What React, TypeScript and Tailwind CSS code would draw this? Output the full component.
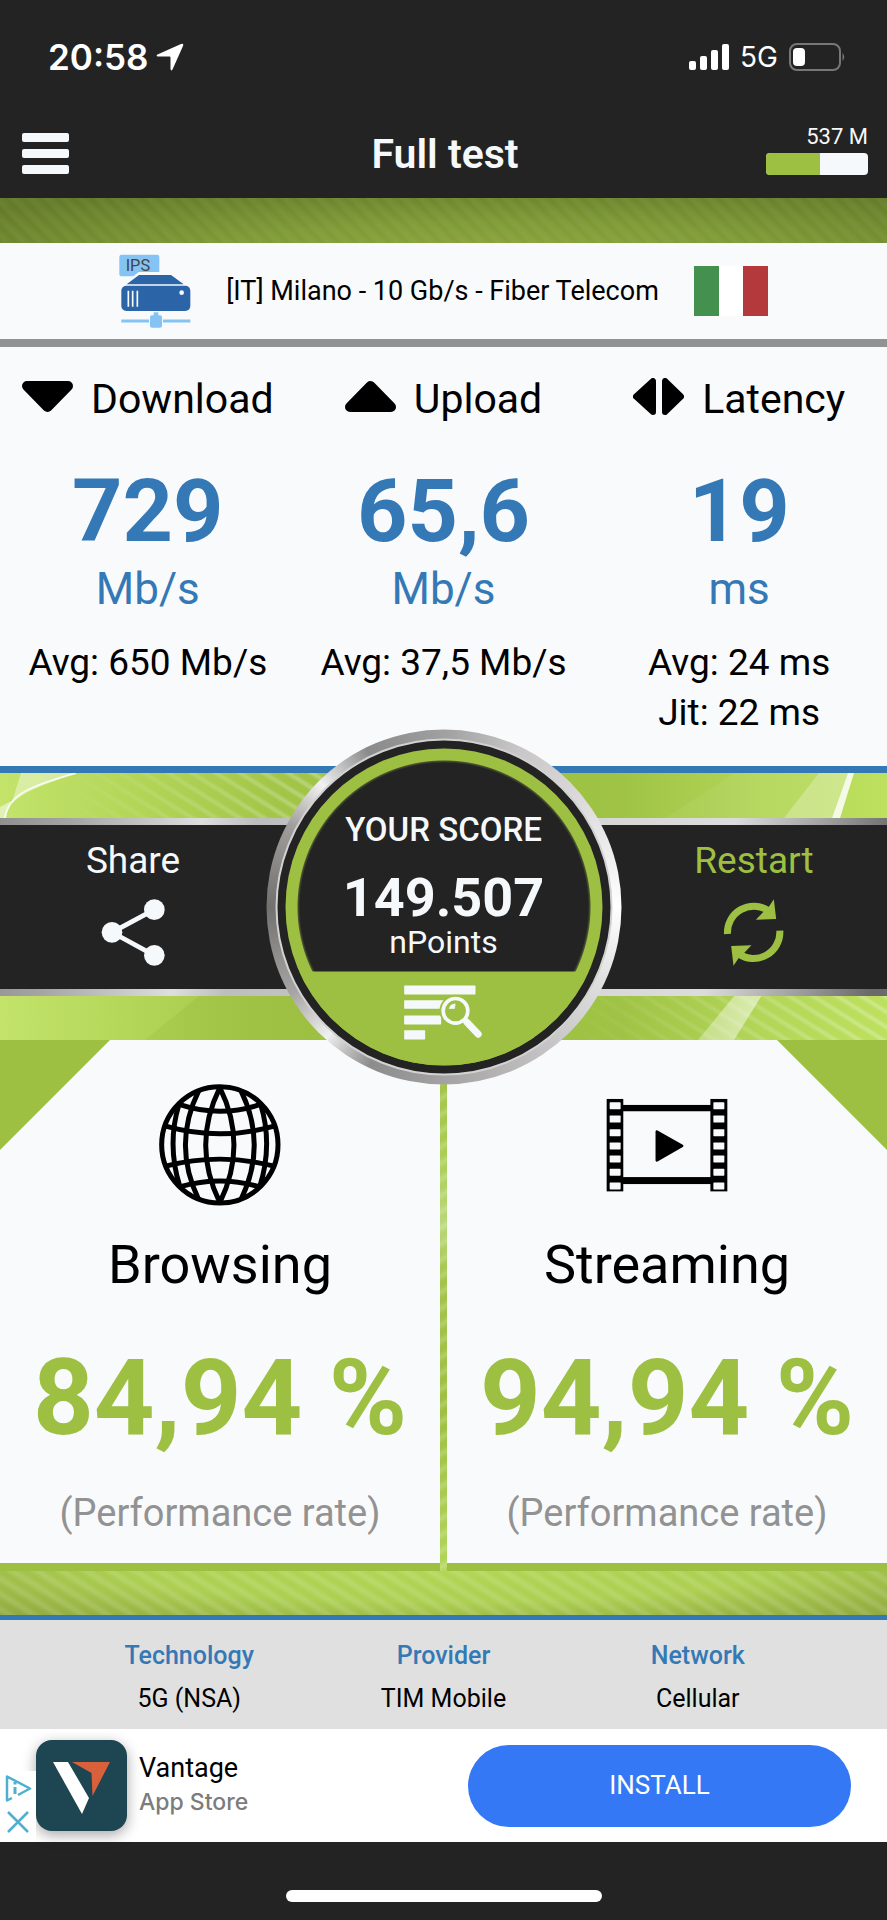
import type { ReactNode } from 'react';

const STATS = [
  { label: 'Download', icon: <DownIcon />, value: '729', unit: 'Mb/s', details: ['Avg: 650 Mb/s'] },
  { label: 'Upload', icon: <UpIcon />, value: '65,6', unit: 'Mb/s', details: ['Avg: 37,5 Mb/s'] },
  { label: 'Latency', icon: <BothIcon />, value: '19', unit: 'ms', details: ['Avg: 24 ms', 'Jit: 22 ms'] },
];

const NETWORK = [
  { label: 'Technology', value: '5G (NSA)' },
  { label: 'Provider', value: 'TIM Mobile' },
  { label: 'Network', value: 'Cellular' },
];

const HOLES = [186, 226, 267, 307, 346, 386, 427];

function DownIcon() {
  return (
    <svg className="w-[51px] h-[42px]" viewBox="0 0 51 42" stroke="#000" strokeWidth="10" strokeLinejoin="round">
      <path d="M5 8 H46 L25.500 29 Z" />
    </svg>
  );
}

function UpIcon() {
  return (
    <svg className="w-[51px] h-[42px]" viewBox="0 0 51 42" stroke="#000" strokeWidth="10" strokeLinejoin="round">
      <path d="M5 29 H46 L25.500 8 Z" />
    </svg>
  );
}

function BothIcon() {
  return (
    <svg className="w-[51px] h-[42px]" viewBox="0 0 51 42" stroke="#000" strokeWidth="6" strokeLinejoin="round">
      <path d="M20 3 V34 L3 18.500 Z" />
      <path d="M32 3 V34 L48 18.500 Z" />
    </svg>
  );
}

function ServerIcon() {
  return (
    <svg className="w-[72px] h-[74px]" viewBox="62 46 216 222">
      <path d="M70 48 H176 Q183 48 183 55 V100 H121 L105 113 H71 Q63 113 63 105 V55 Q63 48 70 48 Z" fill="#84c3f3" />
      <text x="82" y="97" fontSize="49" fontFamily="Roboto, sans-serif" fill="#444">IPS</text>
      <path d="M85 137 L122 109 H218 L256 137 Z" fill="#2b65a7" />
      <rect x="69" y="141" width="207" height="76" rx="15" fill="#2b65a7" />
      <path d="M90 156 V204 M103 156 V204 M117 156 V204" stroke="#f9fafc" strokeWidth="5" />
      <circle cx="250" cy="162" r="7" fill="#f9fafc" />
      <path d="M69 247 H152 M194 247 H276" stroke="#84c3f3" strokeWidth="9" />
      <rect x="155" y="230" width="36" height="37" rx="6" fill="#84c3f3" />
      <rect x="166" y="221" width="14" height="12" fill="#84c3f3" />
    </svg>
  );
}

function GlobeIcon() {
  return (
    <svg className="w-[122px] h-[122px]" viewBox="477 131 367 367" fill="none" stroke="#000" strokeWidth="15">
      <circle cx="660" cy="314" r="175" />
      <path d="M540 193 Q660 233 780 193 M497 258 Q660 304 823 258 M497 378 Q660 336 823 378 M542 440 Q660 406 778 440" />
      <path d="M660 142 Q575 314 660 488 M660 142 Q745 314 660 488" />
      <path d="M597 150 Q516 314 597 480 M723 150 Q804 314 723 480" />
      <path d="M537 193 Q500 314 540 440 M783 193 Q820 314 780 440" />
    </svg>
  );
}

function FilmIcon() {
  return (
    <svg className="w-[122px] h-[122px]" viewBox="505 131 367 367">
      <rect x="507" y="176" width="50" height="278" />
      <rect x="819" y="176" width="51" height="278" />
      <rect x="550" y="194" width="275" height="19" />
      <rect x="550" y="411" width="275" height="21" />
      {HOLES.map((y) => (
        <g key={y} fill="#f9fafc">
          <rect x="516" y={y} width="33" height="21" rx="2" />
          <rect x="828" y={y} width="33" height="21" rx="2" />
        </g>
      ))}
      <path d="M658 274 L734 317 L658 361 Z" stroke="#000" strokeWidth="8" strokeLinejoin="round" />
    </svg>
  );
}

function ShareIcon() {
  return (
    <svg className="w-16 h-[67px]" viewBox="301 540 192 201">
      <path d="M461 572 L334 640 L461 709" fill="none" stroke="#f5f9fc" strokeWidth="14" />
      <g fill="#f5f9fc">
        <circle cx="461" cy="572" r="31" />
        <circle cx="334" cy="640" r="31" />
        <circle cx="461" cy="709" r="31" />
      </g>
    </svg>
  );
}

function RestartIcon() {
  return (
    <svg className="w-[67px] h-[67px]" viewBox="360 540 200 201" fill="#9dc042">
      <g fill="none" stroke="#9dc042" strokeWidth="21">
        <path d="M382 645 A79 79 0 0 1 505 575" />
        <path d="M539 635 A79 79 0 0 1 416 705" />
      </g>
      <path d="M521 541 L528 600 L467 602 L490 578 L503 568 Z" />
      <path d="M400 740 L393 681 L454 679 L431 703 L418 713 Z" />
    </svg>
  );
}

function DetailsIcon() {
  return (
    <svg className="w-20 h-[57px]" viewBox="460 795 240 171">
      <g fill="#f5f9fc">
        <rect x="462" y="798" width="214" height="27" rx="2" />
        <rect x="462" y="842" width="120" height="26" rx="2" />
        <rect x="462" y="888" width="111" height="27" rx="2" />
        <rect x="462" y="932" width="63" height="28" rx="2" />
      </g>
      <circle cx="616" cy="874" r="48" fill="#9dc042" />
      <circle cx="616" cy="874" r="37" fill="none" stroke="#f5f9fc" strokeWidth="11" />
      <path d="M642 900 L652 910" stroke="#f5f9fc" strokeWidth="11" />
      <path d="M650 908 L684 944" stroke="#f5f9fc" strokeWidth="21" strokeLinecap="round" />
      <path d="M597 867 Q600 854 615 853 L613 867 Z" fill="#f5f9fc" stroke="#f5f9fc" strokeWidth="2" />
    </svg>
  );
}

// Glossy wallpaper that shows behind the share / score / restart strip
function GreenBackdrop() {
  return (
    <svg className="absolute inset-0 w-full h-full" viewBox="0 0 887 267" preserveAspectRatio="none">
      <defs>
        <linearGradient id="base" x1="0" x2="1" y1="0" y2="0">
          <stop offset="0" stopColor="#c3e36a" />
          <stop offset="0.15" stopColor="#b3d658" />
          <stop offset="0.32" stopColor="#a2c548" />
          <stop offset="0.5" stopColor="#9dc042" />
          <stop offset="0.7" stopColor="#9fc344" />
          <stop offset="0.86" stopColor="#b3d658" />
          <stop offset="1" stopColor="#bde05e" />
        </linearGradient>
        <linearGradient id="fade" x1="0" x2="1" y1="0" y2="0">
          <stop offset="0" stopColor="#fff" stopOpacity="0" />
          <stop offset="1" stopColor="#fff" stopOpacity="0.35" />
        </linearGradient>
        <linearGradient id="shade" x1="0" x2="1" y1="0" y2="0">
          <stop offset="0" stopColor="#9dc042" stopOpacity="0.3" />
          <stop offset="1" stopColor="#9dc042" />
        </linearGradient>
        <pattern id="stripes" width="24" height="15" patternUnits="userSpaceOnUse">
          <path d="M-24 -15 L48 30 M0 -15 L48 15 M-24 0 L24 30" stroke="#fff" strokeOpacity="0.12" strokeWidth="6" />
          <path d="M-24 -15 L48 30 M0 -15 L48 15 M-24 0 L24 30" stroke="#fff" strokeOpacity="0.16" strokeWidth="3" />
        </pattern>
        <linearGradient id="maskFade" x1="0" x2="1" y1="0" y2="0">
          <stop offset="0" stopColor="#000" />
          <stop offset="1" stopColor="#fff" />
        </linearGradient>
        <mask id="stripeMask">
          <rect x="50" width="280" height="60" fill="url(#maskFade)" />
          <rect x="560" y="200" width="327" height="67" fill="url(#maskFade)" />
        </mask>
      </defs>
      <rect width="887" height="267" fill="url(#base)" />
      <path d="M200 222 L145 267 H320 V222 Z" fill="url(#shade)" />
      <rect width="887" height="267" fill="url(#stripes)" mask="url(#stripeMask)" />
      <path d="M21 0 H76 C45 11 20 20 11 32 Z" fill="#fff" fillOpacity="0.4" />
      <path d="M0 34 L11 28 L5 45 H0 Z" fill="#fff" fillOpacity="0.5" />
      <path d="M76 0 C30 13 8 22 5 45" fill="none" stroke="#fff" strokeOpacity="0.8" strokeWidth="2" />
      <path d="M735 0 H819 L784 45 H665 Z" fill="#fff" fillOpacity="0.06" />
      <path d="M819 0 H848 L832 45 H784 Z" fill="#fff" fillOpacity="0.3" />
      <path d="M848 0 H854 L840 45 H832 Z" fill="#fff" fillOpacity="0.85" />
      <path d="M735 222 H762 L734 267 H698 Z" fill="url(#fade)" />
      <path d="M735 222 H762 L734 267 H698 Z" fill="#fff" fillOpacity="0.3" />
    </svg>
  );
}

function StatusBar() {
  return (
    <div className="flex h-28 items-center justify-between pt-px pl-12 pr-[42px] font-['Inter',sans-serif] text-white">
      <div className="flex items-center gap-2">
        <span className="text-[35px] leading-10 font-semibold">20:58</span>
        <svg className="h-7 w-7" viewBox="0 0 28 28" fill="#fff">
          <path d="M25 1 Q28 0 27 3 L16.500 26.500 Q15 28.500 14.500 26 V14.500 Q14.500 13.500 13.500 13.500 H2 Q-0.500 13 1.500 11.500 Z" />
        </svg>
      </div>
      <div className="flex items-center gap-[11px]">
        <svg className="h-7 w-10" viewBox="0 0 40 28" fill="#fff">
          <rect x="0" y="18" width="7" height="9" rx="2" />
          <rect x="11" y="13" width="7" height="14" rx="2" />
          <rect x="22" y="7" width="7" height="20" rx="2" />
          <rect x="33" y="1" width="7" height="26" rx="2" />
        </svg>
        <span className="text-[28px] leading-8">5G</span>
        <svg className="h-7 w-14" viewBox="0 0 56 28">
          <rect x="1" y="1" width="50" height="26" rx="7" fill="none" stroke="#777" strokeWidth="2" />
          <rect x="4" y="5" width="12" height="18" rx="4" fill="#fff" />
          <path d="M53.500 10 Q57 14 53.500 18 Z" fill="#777" />
        </svg>
      </div>
    </div>
  );
}

function PerformancePanel({ title, value, icon, side }: { title: string; value: string; icon: ReactNode; side: 'left' | 'right' }) {
  const corner = side === 'left' ? 'left-0 [clip-path:polygon(0_0,100%_0,0_100%)]' : 'right-0 [clip-path:polygon(0_0,100%_0,100%_100%)]';
  return (
    <section className="relative flex flex-col items-center border-b-8 border-[#9dc042] bg-[#f9fafc] pt-11 pb-[26px]">
      <div className={`absolute top-0 h-[110px] w-[110px] bg-[#9dc042] ${corner}`} />
      {icon}
      <h2 className="mt-[27px] text-[54px] leading-16">{title}</h2>
      <p className="mt-[45px] text-[106px] leading-28 font-bold whitespace-nowrap text-[#9dc042]">{value}</p>
      <p className="mt-[35px] text-[38px] leading-12 text-[#929292]">(Performance rate)</p>
    </section>
  );
}

export default function App() {
  return (
    <div className="flex min-h-screen w-full flex-col bg-[#232323] font-['Roboto',sans-serif] text-black">
      <header className="bg-[#232323]">
        <StatusBar />
        <div className="grid h-[86px] grid-cols-3 items-center pr-[19px] pb-1 pl-[22px] text-[#f5f9fc]">
          <button type="button" aria-label="Menu" className="flex w-[47px] flex-col gap-[7px]">
            <span className="h-[9px] w-full rounded-xs bg-[#f5f9fc]" />
            <span className="h-[9px] w-full rounded-xs bg-[#f5f9fc]" />
            <span className="h-[9px] w-full rounded-xs bg-[#f5f9fc]" />
          </button>
          <h1 className="pt-0.5 text-center text-[41px] leading-12 font-semibold">Full test</h1>
          <div className="flex flex-col items-end pb-2">
            <span className="text-[22px] leading-7">537 M</span>
            <div className="mt-0.5 h-[22px] w-[102px] overflow-hidden rounded-sm bg-[#f5f9fc]">
              <div className="h-full w-[53%] bg-[#9dc042]" />
            </div>
          </div>
        </div>
      </header>

      {/* Wallpaper strip */}
      <div className="h-[45px] bg-[repeating-linear-gradient(45deg,transparent_0px,rgba(255,255,255,0.05)_4px,rgba(255,255,255,0.05)_6px,transparent_12px),radial-gradient(ellipse_at_56%_120%,#8ca53c_0%,#7d9934_40%,#637a27_90%)]" />

      <div className="flex items-center justify-center gap-[35px] border-b-8 border-[#929292] bg-[#f9fafc] py-[11px]">
        <ServerIcon />
        <span className="text-[27px] leading-8">[IT] Milano - 10 Gb/s - Fiber Telecom</span>
        <div className="flex h-[50px] w-[74px]">
          <span className="flex-1 bg-[#43904f]" />
          <span className="flex-1 bg-white" />
          <span className="flex-1 bg-[#b3393d]" />
        </div>
      </div>

      <section className="grid grid-cols-3 border-b-[7px] border-[#3479b5] bg-[#f9fafc] pt-7 pb-7">
        {STATS.map((stat) => (
          <div key={stat.label} className="flex flex-col items-center">
            <div className="flex items-center gap-[18px]">
              {stat.icon}
              <h2 className="text-[41px] leading-12">{stat.label}</h2>
            </div>
            <p className="mt-11 text-[88px] leading-[88px] font-bold text-[#3479b5]">{stat.value}</p>
            <p className="mt-2.5 text-[44px] leading-12 text-[#3479b5]">{stat.unit}</p>
            <div className="mt-[25px] text-center text-[37px] leading-[50px]">
              {stat.details.map((line) => (
                <p key={line}>{line}</p>
              ))}
            </div>
          </div>
        ))}
      </section>

      {/* Share / score / restart */}
      <div className="relative z-10 pt-[45px] pb-11">
        <GreenBackdrop />
        <div className="relative bg-[linear-gradient(100deg,#8f8f8f_0%,#a5a5a5_8%,#dedede_22%,#bdbdbd_28%,#d4d4d4_60%,#dcdcdc_80%,#a0a0a0_90%,#6a6a6a_98%)] py-[7px]">
          <div className="flex justify-between bg-[#232323]">
            <button type="button" className="flex h-[164px] w-[30%] flex-col items-center pt-[14px] text-[#f5f9fc]">
              <span className="mb-4 text-[37px] leading-11">Share</span>
              <ShareIcon />
            </button>
            <button type="button" className="flex h-[164px] w-[30%] flex-col items-center pt-[14px] text-[#9dc042]">
              <span className="mb-4 text-[37px] leading-11">Restart</span>
              <RestartIcon />
            </button>
          </div>
        </div>

        <button
          type="button"
          className="absolute top-1/2 left-1/2 h-[355px] w-[355px] -translate-x-1/2 -translate-y-1/2 rounded-full bg-[conic-gradient(#a0a0a0_0deg,#c8c6c6_25deg,#d6d4d4_45deg,#ffffff_90deg,#e0e0e0_115deg,#c4c2c2_145deg,#a4a2a2_180deg,#8c8c8c_205deg,#bdbdbd_214deg,#f0f0f0_222deg,#a8a6a4_240deg,#73716f_270deg,#a09e9c_298deg,#f2f2f2_315deg,#bbbbbb_325deg,#8a8a8a_334deg,#a0a0a0_360deg)] p-[9px]"
        >
          <span className="block h-full w-full rounded-full border-2 border-[#d2d2d2] bg-[#232323] p-2">
            <span className="flex h-full w-full flex-col items-center overflow-hidden rounded-full bg-[radial-gradient(circle,#232323_144px,#4a5230_146px,#9dc042_147px)] text-[#f5f9fc]">
              <span className="mt-[61px] text-[33px] leading-10 font-medium">YOUR SCORE</span>
              <span className="mt-[22px] text-[54px] leading-[52px] font-bold">149.507</span>
              <span className="text-[32px] leading-9">nPoints</span>
              <span className="mt-3 flex w-full flex-1 justify-center bg-[#9dc042] pt-[13px]">
                <DetailsIcon />
              </span>
            </span>
          </span>
        </button>
      </div>

      <div className="grid grid-cols-2 gap-[7px] bg-[repeating-linear-gradient(150deg,transparent_0px,rgba(255,255,255,0.2)_5px,transparent_10px,transparent_14px),linear-gradient(#9dc042,#a9cd50_20%,#b9d878_35%,#a2c549_45%,#9dc042_70%,#b2d65a)]">
        <PerformancePanel side="left" title="Browsing" value="84,94 %" icon={<GlobeIcon />} />
        <PerformancePanel side="right" title="Streaming" value="94,94 %" icon={<FilmIcon />} />
      </div>

      <div className="h-11 bg-[repeating-linear-gradient(32deg,transparent_0px,rgba(255,255,255,0.12)_4px,rgba(255,255,255,0.12)_6px,transparent_10px,transparent_13px),radial-gradient(ellipse_at_50%_0%,#b2d655_0%,#adcf52_50%,#8fa93f_100%)]" />

      <dl className="grid grid-cols-3 border-t-[5px] border-[#3479b5] bg-[#e0e0e0] px-[7%] pt-5 pb-3.5 text-center text-[25px] leading-8">
        {NETWORK.map((item) => (
          <div key={item.label} className="flex flex-col gap-[11px]">
            <dt className="font-medium text-[#3479b5]">{item.label}</dt>
            <dd>{item.value}</dd>
          </div>
        ))}
      </dl>

      {/* Ad banner */}
      <aside className="relative flex items-center bg-white py-[11px] pr-9 pl-9">
        <svg className="h-[91px] w-[91px] rounded-2xl bg-[#1d4552] shadow-[0_4px_14px_rgba(0,0,0,0.35)]" viewBox="0 0 91 91">
          <path d="M17 22 H32 L53 58 L46 74 Z" fill="#fff" />
          <path d="M36 22 H74 L56.500 56 L55.500 33 Z" fill="#d8603a" />
        </svg>
        <div className="ml-3 pb-1">
          <p className="text-[27px] leading-9">Vantage</p>
          <p className="text-[23px] leading-8 font-medium text-[#7c7c7c] font-['Inter',sans-serif]">App Store</p>
        </div>
        <button type="button" className="ml-auto h-[82px] w-[47%] rounded-full bg-[#3478f6] text-[26px] text-white">
          INSTALL
        </button>
        <div className="absolute bottom-0.5 left-0 flex w-9 flex-col items-center gap-2 bg-white pt-1 pb-1.5">
          <svg className="h-[27px] w-7" viewBox="0 0 28 27" fill="none" stroke="#4db0cf" strokeWidth="2.500" strokeLinejoin="round">
            <path d="M8 23 L3 25.500 V1.500 L26 13.500 L14 20" />
            <path d="M11 12 V19 M11 7 V9.500" strokeWidth="3" />
          </svg>
          <svg className="h-6 w-6" viewBox="0 0 24 24" fill="none" stroke="#4db0cf" strokeWidth="2.500">
            <path d="M2 2 L22 22 M22 2 L2 22" />
          </svg>
        </div>
      </aside>

      <footer className="flex flex-1 items-end justify-center pt-12 pb-[18px]">
        <div className="h-3 w-[316px] rounded-full bg-white" />
      </footer>
    </div>
  );
}
